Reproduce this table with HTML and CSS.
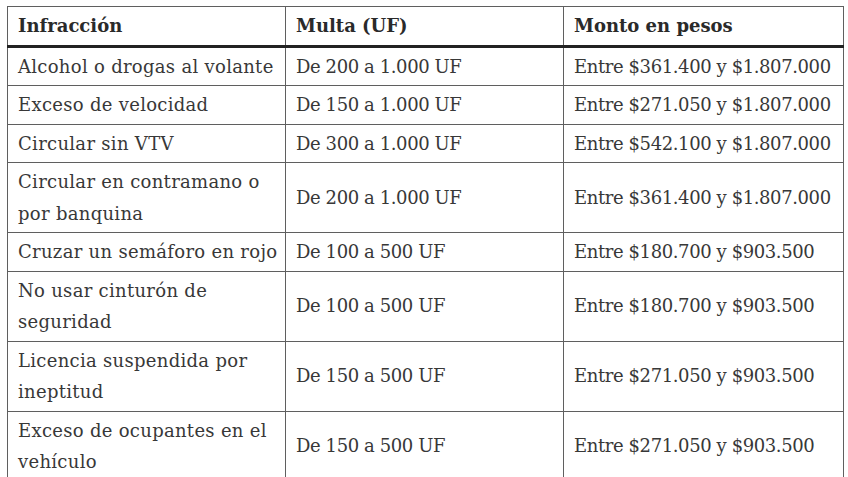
FILE: index.html
```html
<!DOCTYPE html>
<html lang="es">
<head>
<meta charset="utf-8">
<title>Multas</title>
<link rel="stylesheet" href="styles.css">
</head>
<body>
<div class="wrap">
<table class="fines">
  <colgroup><col class="c1"><col class="c2"><col class="c3"></colgroup>
  <thead>
    <tr><th>Infracción</th><th>Multa (UF)</th><th>Monto en pesos</th></tr>
  </thead>
  <tbody>
    <tr><td>Alcohol o drogas al volante</td><td class="num">De 200 a 1.000 UF</td><td class="num">Entre $361.400 y $1.807.000</td></tr>
    <tr><td>Exceso de velocidad</td><td class="num">De 150 a 1.000 UF</td><td class="num">Entre $271.050 y $1.807.000</td></tr>
    <tr><td>Circular sin VTV</td><td class="num">De 300 a 1.000 UF</td><td class="num">Entre $542.100 y $1.807.000</td></tr>
    <tr><td>Circular en contramano o por banquina</td><td class="num">De 200 a 1.000 UF</td><td class="num">Entre $361.400 y $1.807.000</td></tr>
    <tr><td>Cruzar un semáforo en rojo</td><td class="num">De 100 a 500 UF</td><td class="num">Entre $180.700 y $903.500</td></tr>
    <tr><td>No usar cinturón de seguridad</td><td class="num">De 100 a 500 UF</td><td class="num">Entre $180.700 y $903.500</td></tr>
    <tr><td>Licencia suspendida por ineptitud</td><td class="num">De 150 a 500 UF</td><td class="num">Entre $271.050 y $903.500</td></tr>
    <tr><td>Exceso de ocupantes en el vehículo</td><td class="num">De 150 a 500 UF</td><td class="num">Entre $271.050 y $903.500</td></tr>
  </tbody>
</table>
</div>
</body>
</html>
```
FILE: styles.css
```css
html, body {
  margin: 0;
  padding: 0;
  background: #fff;
}
.wrap {
  padding: 6px 0 0 7px;
}
.fines {
  width: 836px;
  border-collapse: collapse;
  table-layout: fixed;
  font-family: "DejaVu Serif", serif;
  font-size: 18px;
  color: #383838;
}
.fines col.c1 { width: 278px; }
.fines col.c2 { width: 278px; }
.fines col.c3 { width: 280px; }
.fines th, .fines td {
  border: 1px solid #5f5f5f;
  text-align: left;
  vertical-align: middle;
  padding: 3px 4px 3px 10px;
  line-height: 31.5px;
}
.fines td {
  letter-spacing: 0.3px;
}
.fines td.num {
  letter-spacing: -0.4px;
}
.fines th {
  font-weight: bold;
  color: #2a2a2a;
  border-bottom: 3px solid #222;
}
```
